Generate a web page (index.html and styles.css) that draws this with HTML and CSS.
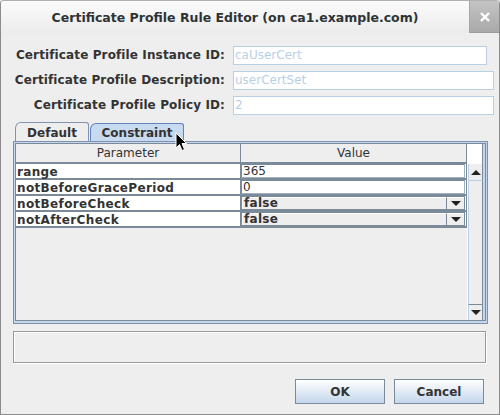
FILE: index.html
```html
<!DOCTYPE html>
<html lang="en">
<head>
    <meta charset="UTF-8">
    <title>Certificate Profile Rule Editor</title>
    <link rel="stylesheet" href="styles.css">
</head>
<body>
    <div class="window">
        <div class="titlebar">
            <span class="title">Certificate Profile Rule Editor (on ca1.example.com)</span>
            <span class="close">
                <svg width="10" height="10" viewBox="0 0 10 10"><path d="M1 1 L9 9 M9 1 L1 9" stroke="#fff" stroke-width="2.4" fill="none"/></svg>
            </span>
        </div>

        <div class="form">
            <label>Certificate Profile Instance ID:</label>
            <div class="field short">caUserCert</div>
            <label>Certificate Profile Description:</label>
            <div class="field">userCertSet</div>
            <label>Certificate Profile Policy ID:</label>
            <div class="field">2</div>
        </div>

        <div class="tabs">
            <div class="tab">Default</div>
            <div class="tab active">Constraint</div>
        </div>

        <div class="panel">
            <div class="scrollpane">
                <div class="table">
                    <div class="th">Parameter</div>
                    <div class="th">Value</div>

                    <div class="param">range</div>
                    <div class="value"><div class="edit">365</div></div>

                    <div class="param">notBeforeGracePeriod</div>
                    <div class="value"><div class="edit">0</div></div>

                    <div class="param">notBeforeCheck</div>
                    <div class="value"><div class="combo"><span class="combo-text">false</span><span class="combo-btn"><i class="down"></i></span></div></div>

                    <div class="param">notAfterCheck</div>
                    <div class="value"><div class="combo"><span class="combo-text">false</span><span class="combo-btn"><i class="down"></i></span></div></div>
                </div>
                <div class="scrollbar">
                    <div class="sb-corner"></div>
                    <div class="sb-btn"><i class="up"></i></div>
                    <div class="sb-track"></div>
                    <div class="sb-btn bottom"><i class="down"></i></div>
                </div>
            </div>
        </div>

        <div class="status"></div>

        <div class="buttons">
            <button>OK</button>
            <button>Cancel</button>
        </div>

        <svg class="cursor" width="13" height="20" viewBox="0 0 13 20">
            <path d="M1 1 L1 16 L4.5 12.5 L7 18.5 L9.5 17.5 L7 11.5 L11.5 11.5 Z" fill="#000" stroke="#fff" stroke-width="1"/>
        </svg>
    </div>
</body>
</html>
```

FILE: styles.css
```css
body {
    margin: 0;
    background-color: #eeeeee;
}
.window {
    position: relative;
    width: 500px;
    height: 415px;
    box-sizing: border-box;
    border: 1px solid #8c8c8c;
    border-top-color: #b0b0b0;
    border-radius: 4px 4px 0 0;
    background-color: #eeeeee;
    overflow: hidden;
    font-family: "DejaVu Sans", sans-serif;
    font-size: 12px;
    color: #333333;
}
.titlebar {
    display: flex;
    height: 32px;
    background: linear-gradient(#fbfbfb, #ebebeb);
}
.title {
    flex: 1;
    text-align: center;
    line-height: 34px;
    font-size: 12.5px;
    font-weight: bold;
    color: #2e3436;
}
.close {
    display: flex;
    align-items: center;
    justify-content: center;
    width: 29px;
    height: 31px;
    background: linear-gradient(#c4c4c4, #a9a9a9);
    border-left: 1px solid #a6a6a6;
    border-bottom: 1px solid #9c9c9c;
}

.form {
    display: grid;
    grid-template-columns: 224px 261px;
    grid-auto-rows: 19px;
    column-gap: 8px;
    row-gap: 6px;
    margin-top: 13px;
}
.form label {
    text-align: right;
    line-height: 19px;
    font-weight: bold;
    letter-spacing: 0.12px;
    white-space: nowrap;
}
.field {
    box-sizing: border-box;
    height: 19px;
    padding: 0 1px;
    border: 1px solid #b8cfe5;
    background-color: white;
    color: #b8cfe5;
    line-height: 17px;
}
.field.short {
    width: 254px;
}

.tabs {
    display: flex;
    gap: 1px;
    height: 19px;
    margin: 7px 0 0 14px;
    align-items: flex-end;
}
.tab {
    box-sizing: border-box;
    width: 74px;
    height: 19px;
    padding-top: 1px;
    border: 1px solid #8293b0;
    border-bottom: none;
    border-radius: 6px 3px 0 0;
    text-align: center;
    line-height: 18px;
    font-weight: bold;
}
.tab.active {
    width: 94px;
    height: 18px;
    line-height: 17px;
    border-color: #6382bf;
    background-color: #c8daf0;
}

.panel {
    box-sizing: border-box;
    width: 475px;
    height: 183px;
    margin-left: 12px;
    padding: 1px 1px 2px 1px;
    border: 1px solid #7d91ae;
    background-color: #c4d7ee;
}
.scrollpane {
    display: flex;
    height: 100%;
    box-sizing: border-box;
    border: 1px solid #7a8a99;
    background-color: #eeeeee;
}
.table {
    display: grid;
    grid-template-columns: 225px 226px;
    grid-template-rows: 20px repeat(4, 16px);
    align-content: start;
}
.th {
    box-sizing: border-box;
    border-right: 1px solid #7a8a99;
    border-bottom: 2px solid #7a8a99;
    text-align: center;
    line-height: 19px;
}
.param {
    box-sizing: border-box;
    padding-left: 1px;
    background-color: white;
    border-right: 1px solid #7a8a99;
    border-bottom: 2px solid #7a8a99;
    font-weight: bold;
    letter-spacing: 0.35px;
    line-height: 16px;
    white-space: nowrap;
}
.value {
    box-sizing: border-box;
    border-right: 1px solid #7a8a99;
    border-bottom: 2px solid #7a8a99;
    background-color: white;
}
.edit {
    box-sizing: border-box;
    height: 14px;
    margin-right: 1px;
    padding-left: 1px;
    border: 1px solid #7a8a99;
    border-right-color: #a3b1bf;
    border-bottom-color: #a3b1bf;
    line-height: 13px;
}
.combo {
    display: flex;
    box-sizing: border-box;
    height: 14px;
    margin-right: 1px;
    border: 1px solid #7a8a99;
    background-color: #eeeeee;
}
.combo-text {
    flex: 1;
    padding-left: 1px;
    border-top: 1px solid #ffffff;
    border-left: 1px solid #ffffff;
    font-weight: bold;
    letter-spacing: 0.3px;
    line-height: 11px;
}
.combo-btn {
    display: flex;
    align-items: center;
    justify-content: center;
    width: 17px;
    border-left: 1px solid #7a8a99;
    border-top: 1px solid #ffffff;
}

.down, .up {
    display: block;
    width: 0;
    height: 0;
    border-left: 5px solid transparent;
    border-right: 5px solid transparent;
}
.down {
    border-top: 5px solid #222222;
}
.up {
    border-bottom: 5px solid #222222;
}

.scrollbar {
    display: flex;
    flex-direction: column;
    width: 18px;
    box-sizing: border-box;
    border-left: 1px solid #ffffff;
    border-right: 2px solid #c4d7ee;
}
.sb-corner {
    height: 20px;
    box-sizing: border-box;
    background-color: white;
    border-right: 1px solid #7a8a99;
}
.sb-btn {
    display: flex;
    align-items: center;
    justify-content: center;
    height: 16px;
    box-sizing: border-box;
    border-right: 1px solid #7a8a99;
    border-left: 1px solid #b8cfe5;
    background-color: #eeeeee;
}
.sb-btn.bottom {
    border-top: 1px solid #7a8a99;
}
.sb-track {
    flex: 1;
    border-left: 1px solid #b8cfe5;
    border-right: 1px solid #7a8a99;
    border-top: 1px solid #b8cfe5;
}

.status {
    box-sizing: border-box;
    width: 473px;
    height: 32px;
    margin: 7px 0 0 12px;
    border: 1px solid #999999;
    box-shadow: 1px 1px 0 #ffffff, inset 1px 1px 0 #ffffff;
}

.buttons {
    display: flex;
    justify-content: flex-end;
    gap: 9px;
    margin-top: 16px;
    padding-right: 15px;
}
button {
    width: 90px;
    height: 25px;
    border: 1px solid #7a8a99;
    background: linear-gradient(#ffffff, #c4d6ec);
    font-family: "DejaVu Sans", sans-serif;
    font-size: 12px;
    font-weight: bold;
    color: #333333;
}

.cursor {
    position: absolute;
    left: 174px;
    top: 131px;
}
```
